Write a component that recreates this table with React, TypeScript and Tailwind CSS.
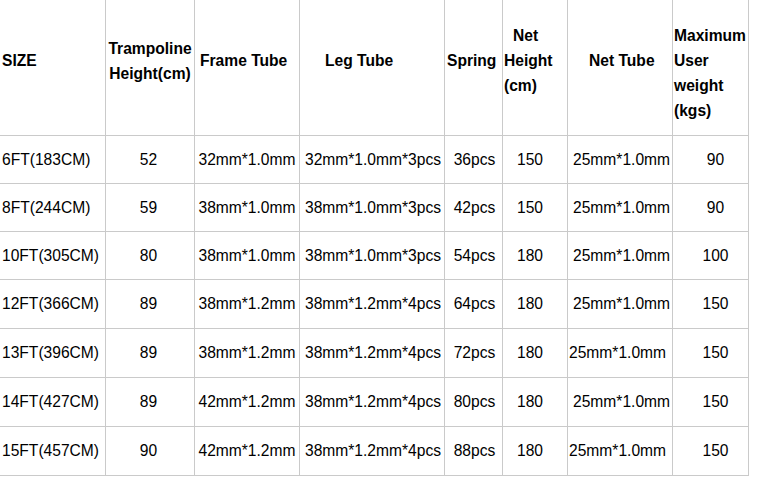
import React from "react";

const rows = [
  ["6FT(183CM)", "52", "32mm*1.0mm", "32mm*1.0mm*3pcs", "36pcs", "150", "25mm*1.0mm", "90"],
  ["8FT(244CM)", "59", "38mm*1.0mm", "38mm*1.0mm*3pcs", "42pcs", "150", "25mm*1.0mm", "90"],
  ["10FT(305CM)", "80", "38mm*1.0mm", "38mm*1.0mm*3pcs", "54pcs", "180", "25mm*1.0mm", "100"],
  ["12FT(366CM)", "89", "38mm*1.2mm", "38mm*1.2mm*4pcs", "64pcs", "180", "25mm*1.0mm", "150"],
  ["13FT(396CM)", "89", "38mm*1.2mm", "38mm*1.2mm*4pcs", "72pcs", "180", "25mm*1.0mm", "150"],
  ["14FT(427CM)", "89", "42mm*1.2mm", "38mm*1.2mm*4pcs", "80pcs", "180", "25mm*1.0mm", "150"],
  ["15FT(457CM)", "90", "42mm*1.2mm", "38mm*1.2mm*4pcs", "88pcs", "180", "25mm*1.0mm", "150"],
];

const rowHeights = ["h-[48px]", "h-[48px]", "h-[48px]", "h-[49px]", "h-[49px]", "h-[49px]", "h-[49px]"];

const bodyAlign = [
  "justify-start pl-[2px]",
  "justify-center pr-[3px]",
  "justify-center",
  "justify-center pl-[2px]",
  "justify-center pl-[2px]",
  "justify-start pl-[14px]",
  "justify-start pl-[5px]",
  "justify-center pl-[10px]",
];

const cell = "flex items-center border-r border-b border-[#cacaca] whitespace-nowrap";

export default function App() {
  return (
    <div
      className="w-[765px] h-[484px] bg-white text-black overflow-hidden"
      style={{ fontFamily: '"Liberation Sans", Arial, sans-serif' }}
    >
      <div className="grid grid-cols-[106px_89px_105px_145px_58px_65px_105px_76px] w-[749px] text-[15.6px]">
        {/* header */}
        <div className={`${cell} h-[136px] pb-[14px] pl-[2px] font-bold`}>SIZE</div>
        <div className={`${cell} h-[136px] pb-[14px] justify-center font-bold leading-[25px] text-center`}>
          <div>
            Trampoline
            <br />
            Height(cm)
          </div>
        </div>
        <div className={`${cell} h-[136px] pb-[14px] pl-[5px] font-bold`}>Frame Tube</div>
        <div className={`${cell} h-[136px] pb-[14px] pl-[25px] font-bold`}>Leg Tube</div>
        <div className={`${cell} h-[136px] pb-[14px] pl-[2px] font-bold`}>Spring</div>
        <div className={`${cell} h-[136px] pb-[14px] pl-[1px] font-bold leading-[25px]`}>
          <div>
            <span className="pl-[9px]">Net</span>
            <br />
            Height
            <br />
            (cm)
          </div>
        </div>
        <div className={`${cell} h-[136px] pb-[14px] pl-[21px] font-bold`}>Net Tube</div>
        <div className={`${cell} h-[136px] pt-[10px] pl-[1px] font-bold leading-[25px]`}>
          <div>
            Maximum
            <br />
            User
            <br />
            weight
            <br />
            (kgs)
          </div>
        </div>

        {/* body */}
        {rows.map((r, ri) =>
          r.map((v, ci) => {
            let align = bodyAlign[ci];
            if (ci === 6 && (ri === 4 || ri === 6)) align = "justify-start pl-[1px]";
            return (
              <div key={`${ri}-${ci}`} className={`${cell} ${rowHeights[ri]} ${align}`}>
                {v}
              </div>
            );
          })
        )}
      </div>
    </div>
  );
}
